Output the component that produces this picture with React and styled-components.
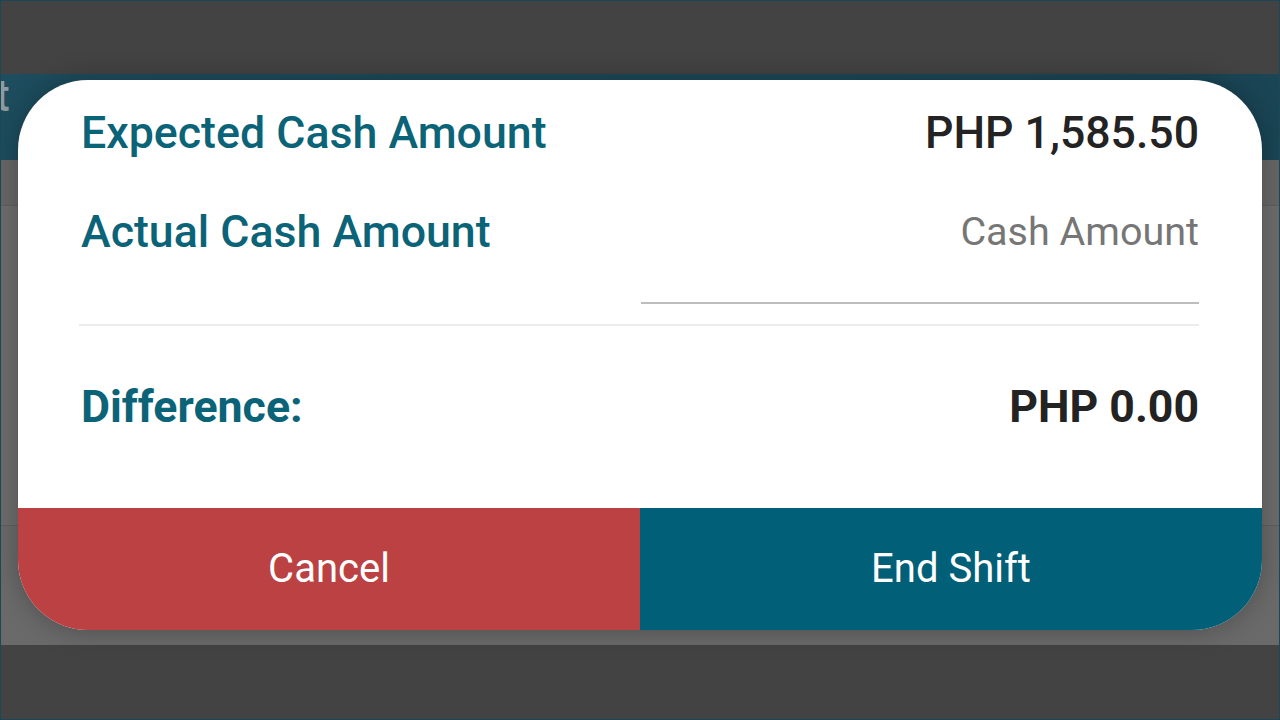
import React from 'react';
import styled, { createGlobalStyle } from 'styled-components';

const GlobalStyle = createGlobalStyle`
  html, body {
    margin: 0;
    padding: 0;
    background: #434343;
    font-family: Roboto, "Noto Sans", "Liberation Sans", sans-serif;
  }
`;

const Screen = styled.div`
  width: 1280px;
  height: 720px;
  box-sizing: border-box;
  border: 1px solid #1c4756;
  background: #434343;
  display: flex;
  flex-direction: column;
  overflow: hidden;
`;

const TopGap = styled.div`
  height: 73px;
`;

const Backdrop = styled.div`
  position: relative;
  height: 571px;
  display: flex;
  flex-direction: column;
  background: #6a6a6a;
`;

const AppBar = styled.div`
  height: 86px;
  background: linear-gradient(90deg, #1d4d5e, #1a4555);
  display: flex;
  align-items: flex-start;
  color: #8d9ca2;
  font-size: 44px;
  line-height: 40px;
  font-weight: 500;
`;

const AppBarTitle = styled.span`
  margin-left: -6px;
  margin-top: 2px;
`;

const SubBar = styled.div`
  height: 45px;
  background: #676767;
  border-bottom: 1px solid #5e5e5e;
`;

const Body = styled.div`
  flex: 1;
  display: flex;
  flex-direction: column;
  justify-content: flex-end;
  background: #6d6d6d;
`;

const Footer = styled.div`
  height: 119px;
  border-top: 1px solid #5f5f5f;
  background: #6a6a6a;
`;

const BottomGap = styled.div`
  flex: 1;
`;

const Modal = styled.div`
  position: absolute;
  top: 6px;
  left: 17px;
  width: 1244px;
  height: 550px;
  background: #ffffff;
  border-radius: 70px;
  overflow: hidden;
  display: flex;
  flex-direction: column;
  box-shadow: 0 0 28px rgba(0, 0, 0, 0.28);
`;

const Content = styled.div`
  flex: 1;
  padding: 27px 63px 0 63px;
  display: flex;
  flex-direction: column;
`;

const Row = styled.div`
  display: flex;
  justify-content: space-between;
  align-items: flex-start;
  margin-top: ${(p) => p.$gap || 0}px;
`;

const Label = styled.div`
  color: #0b6378;
  font-size: 44.7px;
  line-height: 52px;
  font-weight: ${(p) => (p.$bold ? 700 : 500)};
`;

const Value = styled.div`
  color: #232323;
  font-size: 44.6px;
  line-height: 52px;
  font-weight: ${(p) => (p.$bold ? 700 : 500)};
`;

const InputField = styled.div`
  width: 558px;
  height: 93px;
  padding-top: 3px;
  box-sizing: content-box;
  border-bottom: 2px solid #bdbdbd;
  text-align: right;
  color: #767676;
  font-size: 39.5px;
  line-height: 46px;
  font-weight: 400;
`;

const Divider = styled.div`
  margin-top: 20px;
  height: 2px;
  background: #ececec;
  margin-left: -2px;
`;

const Actions = styled.div`
  height: 122px;
  display: flex;
`;

const ActionButton = styled.button`
  flex: 1;
  border: none;
  margin: 0;
  padding: 0;
  background: ${(p) => (p.$danger ? '#bc4142' : '#025f78')};
  color: #ffffff;
  font-family: Roboto, "Noto Sans", "Liberation Sans", sans-serif;
  font-size: 40px;
  font-weight: 400;
  line-height: 122px;
  cursor: pointer;
`;

export default function App() {
  return (
    <>
      <GlobalStyle />
      <Screen>
        <TopGap />
        <Backdrop>
          <AppBar>
            <AppBarTitle>t</AppBarTitle>
          </AppBar>
          <SubBar />
          <Body>
            <Footer />
          </Body>
          <Modal>
            <Content>
              <Row>
                <Label>Expected Cash Amount</Label>
                <Value>PHP 1,585.50</Value>
              </Row>
              <Row $gap={47}>
                <Label>Actual Cash Amount</Label>
                <InputField>Cash Amount</InputField>
              </Row>
              <Divider />
              <Row $gap={55}>
                <Label $bold>Difference:</Label>
                <Value $bold>PHP 0.00</Value>
              </Row>
            </Content>
            <Actions>
              <ActionButton $danger>Cancel</ActionButton>
              <ActionButton>End Shift</ActionButton>
            </Actions>
          </Modal>
        </Backdrop>
        <BottomGap />
      </Screen>
    </>
  );
}
